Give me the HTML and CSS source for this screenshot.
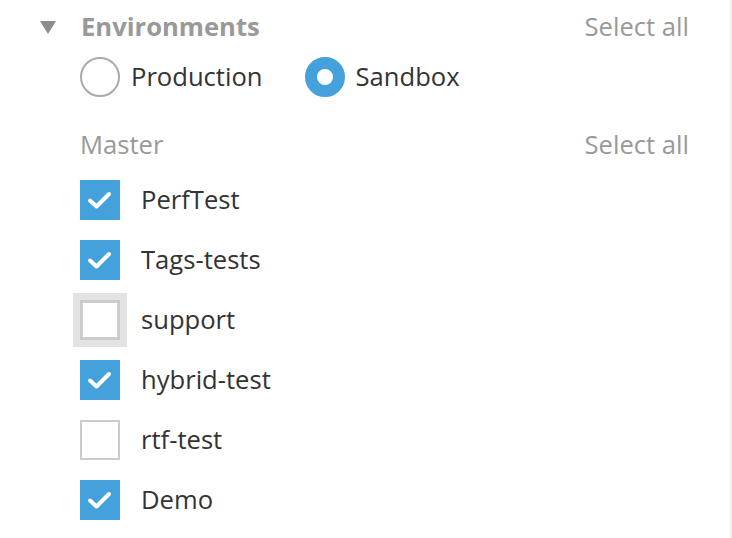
FILE: index.html
```html
<!DOCTYPE html>
<html>
<head>
<meta charset="utf-8">
<link rel="stylesheet" href="styles.css">
</head>
<body>
<div class="panel">
  <div class="section-head">
    <span class="caret"></span>
    <h2 class="title">Environments</h2>
    <span class="select-all">Select all</span>
  </div>
  <div class="radios">
    <label class="radio"><span class="radio-dot"></span><span class="radio-label">Production</span></label>
    <label class="radio radio-on"><span class="radio-dot"></span><span class="radio-label">Sandbox</span></label>
  </div>
  <div class="group-head">
    <span class="group-title">Master</span>
    <span class="select-all">Select all</span>
  </div>
  <ul class="checks">
    <li class="check check-on"><span class="box"><svg viewBox="0 0 40 40" width="40" height="40"><path d="M10 20.5 L16.5 26.5 L29 14" fill="none" stroke="#fff" stroke-width="4" stroke-linecap="round" stroke-linejoin="round"/></svg></span><span class="check-label">PerfTest</span></li>
    <li class="check check-on"><span class="box"><svg viewBox="0 0 40 40" width="40" height="40"><path d="M10 20.5 L16.5 26.5 L29 14" fill="none" stroke="#fff" stroke-width="4" stroke-linecap="round" stroke-linejoin="round"/></svg></span><span class="check-label">Tags-tests</span></li>
    <li class="check check-focus"><span class="box"></span><span class="check-label">support</span></li>
    <li class="check check-on"><span class="box"><svg viewBox="0 0 40 40" width="40" height="40"><path d="M10 20.5 L16.5 26.5 L29 14" fill="none" stroke="#fff" stroke-width="4" stroke-linecap="round" stroke-linejoin="round"/></svg></span><span class="check-label">hybrid-test</span></li>
    <li class="check"><span class="box"></span><span class="check-label">rtf-test</span></li>
    <li class="check check-on"><span class="box"><svg viewBox="0 0 40 40" width="40" height="40"><path d="M10 20.5 L16.5 26.5 L29 14" fill="none" stroke="#fff" stroke-width="4" stroke-linecap="round" stroke-linejoin="round"/></svg></span><span class="check-label">Demo</span></li>
  </ul>
</div>
</body>
</html>
```
FILE: styles.css
```css
* { box-sizing: border-box; }
html, body { margin: 0; padding: 0; background: #fff; }
body {
  font-family: "Open Sans", "Noto Sans", sans-serif;
  color: #333;
  border-right: 2px solid #f0f0f0;
  height: 538px;
  overflow: hidden;
}
.panel {
  padding: 11px 41px 0 40px;
}
.section-head {
  display: flex;
  align-items: center;
  height: 32px;
}
.caret {
  width: 0;
  height: 0;
  border-left: 8px solid transparent;
  border-right: 8px solid transparent;
  border-top: 13px solid #8c8c8c;
  margin-right: 25px;
}
.title {
  margin: 0;
  font-size: 25.6px;
  font-weight: 700;
  color: #999;
  line-height: 32px;
  flex: 1;
}
.select-all {
  font-size: 25.6px;
  color: #999;
  line-height: 32px;
}
.radios {
  display: flex;
  gap: 42px;
  padding-left: 40px;
  margin-top: 14px;
}
.radio {
  display: flex;
  align-items: center;
  gap: 11px;
  height: 40px;
}
.radio-dot {
  width: 40px;
  height: 40px;
  border-radius: 50%;
  border: 2px solid #aaa;
  background: #fff;
}
.radio-on .radio-dot {
  border: 12px solid #44a1db;
}
.radio-label {
  font-size: 25.6px;
  line-height: 32px;
}
.group-head {
  display: flex;
  justify-content: space-between;
  padding-left: 40px;
  margin-top: 32px;
  height: 32px;
  align-items: center;
}
.group-title {
  font-size: 25.6px;
  color: #999;
  line-height: 32px;
}
.checks {
  list-style: none;
  margin: 9px 0 0;
  padding: 0 0 0 40px;
}
.check {
  display: flex;
  align-items: center;
  height: 60px;
  gap: 21px;
}
.box {
  width: 40px;
  height: 40px;
  border: 2px solid #ccc;
  background: #fff;
  flex: none;
}
.box svg { display: block; margin: -2px; }
.check-on .box {
  border-color: #44a1db;
  background: #44a1db;
}
.check-focus .box {
  border-width: 3px;
  box-shadow: 0 0 0 7px #e3e3e3;
}
.check-label {
  font-size: 25.6px;
  line-height: 32px;
}
```
